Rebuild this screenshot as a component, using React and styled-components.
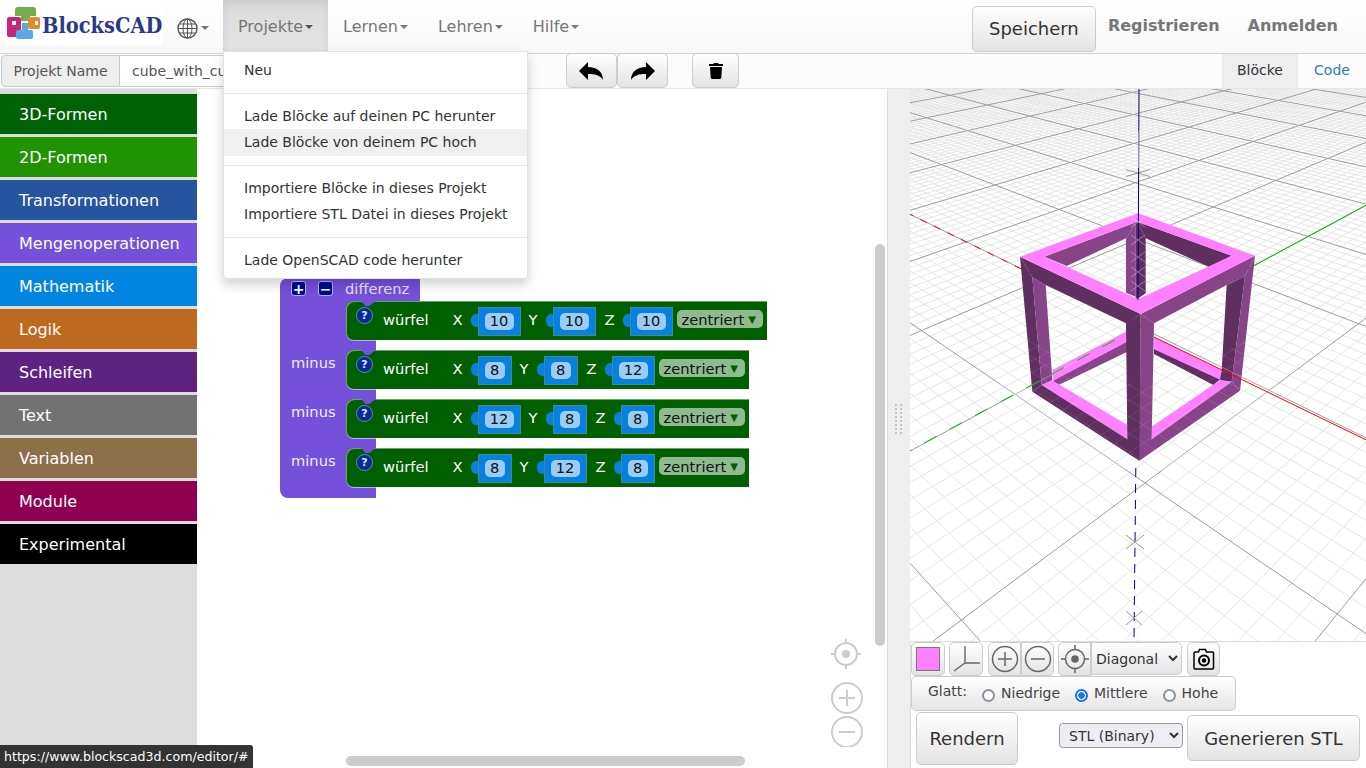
import React from "react";
import styled, { createGlobalStyle } from "styled-components";
import { FaTrash } from "react-icons/fa";

const GlobalStyle = createGlobalStyle`
  html, body {
    margin: 0;
    padding: 0;
    background: #fff;
    overflow: hidden;
  }
  * {
    box-sizing: border-box;
  }
  body {
    font-family: "DejaVu Sans", sans-serif;
  }
`;

const PURPLE = "#7450db";
const GREEN = "#005f00";

const Page = styled.div`
  position: relative;
  width: 1366px;
  height: 768px;
  overflow: hidden;
  display: flex;
  flex-direction: column;
`;

const Navbar = styled.header`
  height: 54px;
  flex: none;
  display: flex;
  align-items: flex-start;
  background: linear-gradient(to bottom, #fff, #f8f8f8);
  border-bottom: 1px solid #d4d4d4;
`;

const LogoBox = styled.div`
  width: 157px;
  height: 41px;
  margin: 4px 0 0 6px;
  background: #fff;
  display: flex;
  align-items: center;
  flex: none;
  position: relative;
`;

const LogoText = styled.span`
  display: inline-block;
  margin-left: 36px;
  margin-top: -1px;
  font-family: "DejaVu Serif", serif;
  font-weight: 700;
  font-size: 23px;
  color: #2b3a86;
  transform: scaleX(0.845);
  transform-origin: left center;
`;

const LogoMark = styled.svg`
  position: absolute;
  left: 0;
  top: 3px;
`;

const GlobeToggle = styled.div`
  margin: 17px 14px 0 14px;
  display: flex;
  align-items: center;
  gap: 1px;
  height: 22px;
`;

const Caret = styled.i`
  display: inline-block;
  width: 0;
  height: 0;
  margin-left: 2px;
  border-top: 4px solid ${(p) => p.$color || "#777"};
  border-left: 4px solid transparent;
  border-right: 4px solid transparent;
`;

const NavItem = styled.div`
  height: 52px;
  padding: 1px 15px 0;
  display: flex;
  align-items: center;
  font-size: 16px;
  color: #777;
  background: ${(p) => (p.$active ? "linear-gradient(to bottom,#dbdbdb,#e4e4e4)" : "transparent")};
  box-shadow: ${(p) => (p.$active ? "inset 0 3px 9px rgba(0,0,0,.08)" : "none")};
`;

const NavRight = styled.div`
  margin-left: auto;
  display: flex;
  align-items: center;
  height: 52px;
  padding-right: 28px;
`;

const Button = styled.button`
  font-family: inherit;
  color: #333;
  background: linear-gradient(to bottom, #fff, #e3e3e3);
  border: 1px solid #ccc;
  border-radius: 5px;
  padding: 0;
  display: flex;
  align-items: center;
  justify-content: center;
`;

const SaveButton = styled(Button)`
  width: 124px;
  height: 46px;
  margin-top: 5px;
  font-size: 18px;
`;

const NavLink = styled.a`
  font-size: 16px;
  font-weight: 700;
  color: #777;
  margin-left: ${(p) => p.$gap}px;
  margin-top: -2px;
`;

const SubBar = styled.div`
  height: 35px;
  flex: none;
  display: flex;
  align-items: stretch;
  background: #fcfcfc;
  border-bottom: 1px solid #e6e6e6;
`;

const NameGroup = styled.div`
  display: flex;
  margin: 1px 0 0 1px;
  width: 524px;
  height: 32px;
  font-size: 14px;
  color: #555;
`;

const NameLabel = styled.div`
  width: 119px;
  padding-bottom: 1px;
  background: #eee;
  border: 1px solid #ccc;
  border-radius: 4px 0 0 4px;
  display: flex;
  align-items: center;
  justify-content: center;
`;

const NameInput = styled.div`
  flex: 1;
  padding: 0 0 1px 12px;
  background: #fff;
  border: 1px solid #ccc;
  border-left: none;
  display: flex;
  align-items: center;
`;

const IconButton = styled(Button)`
  width: ${(p) => p.$w}px;
  height: 35px;
  margin-left: ${(p) => p.$gap || 0}px;
  margin-top: -1px;
  color: #000;
`;

const ArrowSvg = styled.svg`
  transform: ${(p) => (p.$flip ? "scaleX(-1)" : "none")};
`;

const Tabs = styled.div`
  margin-left: auto;
  display: flex;
  font-size: 14px;
`;

const Tab = styled.div`
  width: ${(p) => p.$w}px;
  padding-bottom: 2px;
  display: flex;
  align-items: center;
  justify-content: center;
  background: ${(p) => (p.$active ? "#eee" : "transparent")};
  color: ${(p) => (p.$active ? "#333" : "#337ab7")};
`;

const Main = styled.main`
  flex: 1;
  display: flex;
  min-height: 0;
`;

const Toolbox = styled.nav`
  width: 197px;
  flex: none;
  background: #ddd;
  padding-top: 5px;
  display: flex;
  flex-direction: column;
  gap: 3px;
`;

const Category = styled.div`
  height: 40px;
  padding-left: 19px;
  display: flex;
  align-items: center;
  color: #fff;
  font-size: 16px;
  background: ${(p) => p.$color};
`;

const Workspace = styled.section`
  position: relative;
  width: 690px;
  flex: none;
  background: #fff;
`;

const Scroll = styled.div`
  position: absolute;
  background: #ccc;
  border-radius: 5px;
  left: ${(p) => p.$x}px;
  top: ${(p) => p.$y}px;
  width: ${(p) => p.$w}px;
  height: ${(p) => p.$h}px;
`;

const ZoomIcons = styled.svg`
  position: absolute;
  left: 630px;
  top: 548px;
`;

/* the block stack sits on the free blockly canvas */
const BlockStack = styled.div`
  position: absolute;
  left: 83px;
  top: 189px;
  font-size: 14.67px;
  color: #fff;
`;

const DiffHeader = styled.div`
  width: 140px;
  height: 23px;
  background: ${PURPLE};
  border-radius: 8px 0 0 0;
  display: flex;
  align-items: center;
  padding: 0 0 2px 11px;
  color: #e6e0fa;
`;

const Mutator = styled.span`
  width: 15px;
  height: 15px;
  background: #000a8c;
  border: 1px solid #b9b0ee;
  border-radius: 3px;
  margin-right: 12px;
  display: flex;
  align-items: center;
  justify-content: center;
  color: #fff;
  font-size: 14px;
  font-weight: 700;
  line-height: 1;
`;

const StackRow = styled.div`
  display: flex;
  align-items: flex-start;
  height: 39px;
  background: linear-gradient(to right, ${PURPLE} 76px, transparent 76px);
`;

const Mouth = styled.div`
  width: 66px;
  height: 39px;
  flex: none;
  padding: 4px 0 0 11px;
  color: #f0ecff;
`;

const CubeBlock = styled.div`
  position: relative;
  height: 39px;
  display: inline-flex;
  align-items: center;
  padding: 0 4px 0 10px;
  background: ${GREEN};
  border-radius: 8px 0 0 8px;
  box-shadow: inset 1px 1px 0 #6f9f6f, 0 1px 0 rgba(255, 255, 255, 0.55);

  &::before {
    content: "";
    position: absolute;
    left: 15px;
    top: 0;
    width: 15px;
    height: 5px;
    background: ${PURPLE};
    clip-path: polygon(0 0, 100% 0, 55% 100%, 30% 100%);
  }
`;

const HelpIcon = styled.span`
  position: relative;
  width: 17px;
  height: 17px;
  flex: none;
  margin: -11px 10px 0 0;
  border-radius: 50%;
  background: #0a2a96;
  border: 1px solid #5f8fb0;
  color: #dfe6ff;
  font-size: 11px;
  font-weight: 700;
  display: flex;
  align-items: center;
  justify-content: center;
`;

const CubeTitle = styled.span`
  margin-right: 24px;
  margin-top: -2px;
`;

const AxisLabel = styled.span`
  margin-right: 8px;
  margin-left: ${(p) => p.$extra || 0}px;
  margin-top: -2px;
`;

const ValueTab = styled.span`
  width: 7px;
  height: 13px;
  flex: none;
  background: #0880e0;
  border-radius: 5px 0 0 5px / 6px 0 0 6px;
`;

const ValueBox = styled.span`
  height: 29px;
  margin-top: 1px;
  margin-right: ${(p) => (p.$last ? 4 : 8)}px;
  padding: 0 6px;
  display: flex;
  align-items: center;
  background: #0880e0;
  border: 1px solid #3f8a9a;
`;

const ValuePill = styled.span`
  width: ${(p) => (p.$wide ? 29 : 20)}px;
  height: 17px;
  border-radius: 5px;
  background: #99cdf6;
  color: #111;
  text-align: center;
  line-height: 16px;
`;

const Dropdown = styled.span`
  height: 18px;
  width: 86px;
  padding-left: 5px;
  margin-top: -3px;
  border-radius: 5px;
  background: #8fbb8f;
  color: #111;
  display: flex;
  align-items: center;
  gap: 4px;
  white-space: nowrap;

  small {
    color: ${GREEN};
    font-size: 10px;
  }
`;

const Connector = styled.div`
  width: 96px;
  height: 10px;
  background: ${PURPLE};
`;

const StackEnd = styled(Connector)`
  height: 11px;
  border-radius: 0 0 0 8px;
`;

const Splitter = styled.div`
  width: 23px;
  flex: none;
  background: #efefef;
  border-left: 1px solid #ddd;
  display: flex;
  align-items: center;
  justify-content: center;
  padding-bottom: 20px;
`;

const ViewerPanel = styled.section`
  flex: 1;
  display: flex;
  flex-direction: column;
  background: #fff;
  border-left: 1px solid #ddd;
`;

const ViewerCanvas = styled.svg`
  display: block;
  flex: none;
  margin-left: -1px;
`;

const ViewBar = styled.div`
  height: 35px;
  flex: none;
  display: flex;
  border-top: 1px solid #ddd;
`;

const ViewButton = styled(Button)`
  width: ${(p) => p.$w || 34}px;
  height: 34px;
  margin-left: ${(p) => p.$gap || 0}px;
  border-radius: ${(p) => p.$radius || "5px"};
`;

const Swatch = styled.span`
  width: 24px;
  height: 24px;
  background: #ff80ff;
  border: 1px solid #777;
`;

const ViewSelect = styled.select`
  width: 91px;
  height: 33px;
  font-family: inherit;
  font-size: 14px;
  color: #333;
  padding-left: 0;
  background: linear-gradient(to bottom, #fff, #e3e3e3);
  border: 1px solid #ccc;
  border-radius: 0 5px 5px 0;
`;

const SmoothPanel = styled.div`
  width: 325px;
  height: 35px;
  flex: none;
  display: flex;
  align-items: center;
  font-size: 14px;
  color: #444;
  padding-left: 16px;
  background: linear-gradient(to bottom, #fff, #e6e6e6);
  border: 1px solid #ccc;
  border-radius: 5px;

  > span {
    margin: -5px 6px 0 0;
  }
`;

const RadioLabel = styled.label`
  display: flex;
  align-items: center;
  margin-left: ${(p) => p.$gap}px;
  margin-top: -1px;
  gap: 6px;

  input {
    appearance: none;
    width: 13px;
    height: 13px;
    margin: 4px 0 0;
    background: #fff;
    border: 2px solid #8f8f9d;
    border-radius: 50%;
  }

  input:checked {
    border-color: #1a73e8;
    background: radial-gradient(circle, #1a73e8 0, #1a73e8 3px, #fff 3.5px);
  }
`;

const ExportBar = styled.div`
  flex: 1;
  display: flex;
  align-items: center;
  padding: 0 0 3px 5px;
`;

const RenderButton = styled(Button)`
  width: 102px;
  height: 53px;
  font-size: 18px;
  margin-top: 1px;
`;

const FormatSelect = styled.select`
  width: 124px;
  height: 25px;
  margin: -5px 0 0 41px;
  font-family: inherit;
  font-size: 14px;
  color: #333;
  background: #ededf3;
  border: 1px solid #9a9aa5;
  border-radius: 4px;
  padding-left: 5px;
`;

const StlButton = styled(Button)`
  width: 173px;
  height: 46px;
  margin-left: 4px;
  font-size: 18px;
`;

const Menu = styled.ul`
  position: absolute;
  left: 223px;
  top: 51px;
  width: 305px;
  height: 228px;
  margin: 0;
  padding: 5px 0;
  list-style: none;
  background: #fff;
  border: 1px solid #e2e2e2;
  border-radius: 0 0 4px 4px;
  box-shadow: 0 6px 12px rgba(0, 0, 0, 0.175);
  font-size: 14px;
  color: #333;
`;

const MenuItem = styled.li`
  height: 26.5px;
  line-height: 26.5px;
  padding-left: 20px;
  background: ${(p) => (p.$hover ? "#f0f0f0" : "transparent")};
`;

const MenuDivider = styled.li`
  height: 1px;
  margin: 9px 0;
  background: #e5e5e5;
`;

const StatusTip = styled.div`
  position: absolute;
  left: 0;
  bottom: 0;
  width: 253px;
  height: 23px;
  padding-left: 4px;
  background: #333;
  color: #fff;
  font-size: 12.6px;
  line-height: 23px;
  white-space: nowrap;
  border-top-right-radius: 3px;
`;

const categories = [
  ["3D-Formen", "#006205"],
  ["2D-Formen", "#209303"],
  ["Transformationen", "#26549e"],
  ["Mengenoperationen", PURPLE],
  ["Mathematik", "#0185e1"],
  ["Logik", "#be6920"],
  ["Schleifen", "#5e2281"],
  ["Text", "#727272"],
  ["Variablen", "#8c7049"],
  ["Module", "#900050"],
  ["Experimental", "#000"],
];

const cubes = [
  { label: "", v: [10, 10, 10] },
  { label: "minus", v: [8, 8, 12] },
  { label: "minus", v: [12, 8, 8] },
  { label: "minus", v: [8, 12, 8] },
];

// floor plane projection, fitted to the grid of the 3D view
function project(u, v) {
  const t = (u - v) / 2;
  const w = u + v;
  const s = 1 / (0.002481 - 0.000692 * t);
  const y = -76 + s - w * 0.0043 * s;
  const x = 1140 + (y - 327) * 0.032 + w * 0.2713 * s;
  return `${x.toFixed(1)} ${y.toFixed(1)}`;
}

function gridPath(step, skipMajor) {
  let d = "";
  const n = Math.round(20 / step);
  for (let i = -n; i <= n; i++) {
    if (skipMajor && i % 10 === 0) continue;
    const c = i * step;
    d += `M${project(c, c - 6)}L${project(c, c + 14)}`;
    d += `M${project(c - 14, c)}L${project(c + 6, c)}`;
  }
  return d;
}

const minorGrid = gridPath(0.1, true);
const majorGrid = gridPath(1, false);

const Cross = ({ x, y, rx, ry, color }) => (
  <path d={`M${x - rx} ${y - ry}L${x + rx} ${y + ry}M${x - rx} ${y + ry}L${x + rx} ${y - ry}`} stroke={color} fill="none" />
);

const TOP = "#ff80ff";
const LIGHT = "#884488";
const DARK = "#5f2f60";

const Cube = () => (
  <g transform="translate(1000 190) scale(0.33333)">
    {/* back column */}
    <polygon points="412,95 378,145 378,308 407,320 407,95" fill={LIGHT} />
    <polygon points="412,95 437,145 437,310 407,330 407,95" fill={DARK} />
    {/* back rails of the bottom */}
    <polygon points="382,452 160,565 165,590 382,485" fill={LIGHT} />
    <polygon points="382,423 157,540 160,572 382,455" fill={TOP} />
    <polygon points="462,475 662,567 640,585 462,492" fill={DARK} />
    <polygon points="462,440 665,540 662,570 462,478" fill={TOP} />
    {/* front rails of the bottom */}
    <polygon points="125,585 155,570 382,705 382,748" fill={TOP} />
    <polygon points="455,710 660,570 695,575 455,748" fill={TOP} />
    <polygon points="97,605 125,585 382,748 418,768 418,812" fill={DARK} />
    <polygon points="418,812 720,602 695,575 455,748 418,768" fill={LIGHT} />
    {/* left column */}
    <polygon points="60,200 97,262 125,585 97,605" fill={DARK} />
    <polygon points="97,262 137,285 157,570 125,585" fill={LIGHT} />
    {/* right column */}
    <polygon points="680,285 735,258 695,575 660,570 665,540" fill={DARK} />
    <polygon points="735,258 765,197 720,602 695,575" fill={LIGHT} />
    {/* top ring */}
    <polygon points="133,200 412,95 378,145 200,228" fill={LIGHT} />
    <polygon points="412,95 695,197 630,232 437,145" fill={DARK} />
    <polygon points="60,200 422,372 378,400 137,285 97,262" fill={DARK} />
    <polygon points="422,372 765,197 735,258 680,285 462,400" fill={LIGHT} />
    {/* front column */}
    <polygon points="378,398 422,372 420,812 382,748" fill={DARK} />
    <polygon points="422,372 462,400 455,748 418,812" fill={LIGHT} />
    <path
      fillRule="evenodd"
      fill={TOP}
      d="M415 70L765 197L422 372L60 200ZM412 95L133 200L415 327L695 197Z"
    />
  </g>
);

const Viewer = () => (
  <ViewerCanvas width="456" height="552" viewBox="910 89 456 552">
    <defs>
      <clipPath id="below-floor">
        <polygon points="1000,327 1140,387 1277,327 1277,470 1000,470" />
      </clipPath>
    </defs>
    <rect x="910" y="89" width="456" height="552" fill="#fff" />
    <path d={minorGrid} stroke="#e6e6e6" fill="none" />
    <path d={majorGrid} stroke="#9c9c9c" fill="none" />
    <path d={`M${project(-5, 0)}L${project(0, 0)}`} stroke="#f00" strokeDasharray="7 8" fill="none" />
    <path d={`M${project(0, 0)}L${project(0, 5)}`} stroke="#0b0" fill="none" />
    <Cross x={1138} y={173} rx={12} ry={3.5} color="#999" />
    <Cube />
    <g clipPath="url(#below-floor)">
      <path d={minorGrid} stroke="rgba(255,255,255,.1)" fill="none" />
      <path d={majorGrid} stroke="rgba(255,255,255,.3)" fill="none" />
    </g>
    <path d={`M1154 337L${project(3, 0)}`} stroke="#f00" fill="none" />
    <path d={`M1115 340L${project(0, -3)}`} stroke="#0b0" strokeDasharray="14 15" fill="none" />
    <path d="M1139 89L1138 300" stroke="#00008b" fill="none" />
    <path d="M1138.8 131L1138.6 168" stroke="#a4a4d4" fill="none" />
    {[222, 240, 257, 272, 286].map((y) => (
      <Cross key={y} x={1138} y={y} rx={7} ry={5} color="rgba(255,255,255,.35)" />
    ))}
    <path d="M1135.8 468L1134 641" stroke="#00008b" strokeDasharray="9 7" fill="none" />
    <Cross x={1135} y={542} rx={9} ry={7} color="#999" />
    <Cross x={1134} y={618} rx={8} ry={7} color="#999" />
  </ViewerCanvas>
);

const Logo = () => (
  <LogoMark width="36" height="34" viewBox="6 7 36 34">
    <path d="M15 10a3 3 0 0 1 3-3h15a3 3 0 0 1 3 3v6h-6v5h-9v-5h-6z" fill="#73ad4e" />
    <rect x="7" y="17" width="14" height="20" rx="2" fill="#c9257a" />
    <rect x="12" y="21" width="4" height="4" fill="#fff" />
    <rect x="28" y="17" width="12" height="12" rx="2" fill="#e08a2c" />
    <rect x="35" y="21" width="3" height="4" fill="#fff" />
    <path d="M22 23h6v7h3a2 2 0 0 1 2 2v5a2 2 0 0 1-2 2H18a2 2 0 0 1-2-2v-5a2 2 0 0 1 2-2h4z" fill="#5aa7e6" />
  </LogoMark>
);

const Globe = () => (
  <svg width="21" height="21" viewBox="0 0 21 21" fill="none" stroke="#555" strokeWidth="1">
    <circle cx="10.5" cy="10.5" r="9.5" strokeWidth="1.4" />
    <ellipse cx="10.5" cy="10.5" rx="4.5" ry="9.5" />
    <path d="M10.5 1v19M1 10.5h19M2.4 6h16.2M2.4 15h16.2" />
  </svg>
);

const ArrowIcon = ({ flip }) => (
  <ArrowSvg $flip={flip} width="25" height="20" viewBox="0 0 25 20">
    <path d="M0 10L9 1V6C18 6 24 11 24 19C21 14 16 13 9 13V19Z" fill="#000" />
  </ArrowSvg>
);

const Target = ({ color = "#666" }) => (
  <svg width="30" height="30" viewBox="0 0 30 30" fill="none" stroke={color} strokeWidth="1.5">
    <circle cx="15" cy="15" r="9.5" />
    <circle cx="15" cy="15" r="3.8" fill={color} stroke="none" />
    <path d="M15 1v4M15 25v4M1 15h4M25 15h4" />
  </svg>
);

const RoundSign = ({ minus }) => (
  <svg width="28" height="28" viewBox="0 0 28 28" fill="none" stroke="#666" strokeWidth="1.5">
    <circle cx="14" cy="14" r="12.5" />
    <path d={minus ? "M7 14h14" : "M7 14h14M14 7v14"} />
  </svg>
);

const AxesIcon = () => (
  <svg width="28" height="28" viewBox="0 0 28 28" fill="none" stroke="#666" strokeWidth="1.4">
    <path d="M13 1v17M13 18h15M13 18L2 26" />
  </svg>
);

const CameraIcon = () => (
  <svg width="22" height="24" viewBox="0 0 22 24" fill="none" stroke="#000" strokeWidth="1.5">
    <path d="M2 5h3.500l1-2.500h6l1 2.500h6a1 1 0 0 1 1 1v15a1 1 0 0 1-1 1H2a1 1 0 0 1-1-1V6a1 1 0 0 1 1-1z" />
    <circle cx="11" cy="13.500" r="5" strokeWidth="2" />
    <circle cx="11" cy="13.500" r="2.200" fill="#000" stroke="none" />
  </svg>
);

const Grip = () => (
  <svg width="8" height="30" viewBox="0 0 8 30" fill="#c4c4c4">
    {Array.from({ length: 8 }).map((_, i) => (
      <React.Fragment key={i}>
        <rect x="0" y={i * 4} width="2" height="2" />
        <rect x="5" y={i * 4} width="2" height="2" />
      </React.Fragment>
    ))}
  </svg>
);

const CubeRow = ({ label, v }) => (
  <StackRow>
    <Mouth>{label}</Mouth>
    <CubeBlock>
      <HelpIcon>?</HelpIcon>
      <CubeTitle>würfel</CubeTitle>
      {["X", "Y", "Z"].map((axis, i) => (
        <React.Fragment key={axis}>
          <AxisLabel $extra={i === 2 ? 1 : 0}>{axis}</AxisLabel>
          <ValueTab />
          <ValueBox $last={i === 2}>
            <ValuePill $wide={v[i] > 9}>{v[i]}</ValuePill>
          </ValueBox>
        </React.Fragment>
      ))}
      <Dropdown>
        zentriert <small>▼</small>
      </Dropdown>
    </CubeBlock>
  </StackRow>
);

export default function App() {
  return (
    <Page>
      <GlobalStyle />
      <Navbar>
        <LogoBox>
          <Logo />
          <LogoText>BlocksCAD</LogoText>
        </LogoBox>
        <GlobeToggle>
          <Globe />
          <Caret />
        </GlobeToggle>
        <NavItem $active>
          Projekte
          <Caret $color="#555" />
        </NavItem>
        <NavItem>
          Lernen
          <Caret />
        </NavItem>
        <NavItem>
          Lehren
          <Caret />
        </NavItem>
        <NavItem>
          Hilfe
          <Caret />
        </NavItem>
        <NavRight>
          <SaveButton>Speichern</SaveButton>
          <NavLink $gap={12}>Registrieren</NavLink>
          <NavLink $gap={28}>Anmelden</NavLink>
        </NavRight>
      </Navbar>
      <SubBar>
        <NameGroup>
          <NameLabel>Projekt Name</NameLabel>
          <NameInput>cube_with_cu</NameInput>
        </NameGroup>
        <IconButton $w={51} $gap={41}>
          <ArrowIcon />
        </IconButton>
        <IconButton $w={51}>
          <ArrowIcon flip />
        </IconButton>
        <IconButton $w={47} $gap={24}>
          <FaTrash size={16} />
        </IconButton>
        <Tabs>
          <Tab $w={76} $active>
            Blöcke
          </Tab>
          <Tab $w={68}>Code</Tab>
        </Tabs>
      </SubBar>
      <Main>
        <Toolbox>
          {categories.map(([name, color]) => (
            <Category key={name} $color={color}>
              {name}
            </Category>
          ))}
        </Toolbox>
        <Workspace>
          <BlockStack>
            <DiffHeader>
              <Mutator>+</Mutator>
              <Mutator>−</Mutator>
              differenz
            </DiffHeader>
            {cubes.map((c, i) => (
              <React.Fragment key={i}>
                <CubeRow label={c.label} v={c.v} />
                {i < cubes.length - 1 ? <Connector /> : <StackEnd />}
              </React.Fragment>
            ))}
          </BlockStack>
          <Scroll $x={678} $y={155} $w={10} $h={402} />
          <Scroll $x={149} $y={667} $w={399} $h={10} />
          <ZoomIcons width="40" height="110" viewBox="0 0 40 110" fill="none" stroke="#ccc" strokeWidth="2">
            <circle cx="19" cy="17" r="11" />
            <circle cx="19" cy="17" r="4" fill="#ccc" stroke="none" />
            <path d="M19 2v4M19 28v4M4 17h4M30 17h4" />
            <circle cx="20" cy="61" r="15" />
            <path d="M12 61h16M20 53v16" />
            <circle cx="20" cy="95" r="15" />
            <path d="M12 95h16" />
          </ZoomIcons>
        </Workspace>
        <Splitter>
          <Grip />
        </Splitter>
        <ViewerPanel>
          <Viewer />
          <ViewBar>
            <ViewButton>
              <Swatch />
            </ViewButton>
            <ViewButton $gap={4}>
              <AxesIcon />
            </ViewButton>
            <ViewButton $gap={5} $w={33} $radius="5px 0 0 5px">
              <RoundSign />
            </ViewButton>
            <ViewButton $w={33} $radius="0 5px 5px 0">
              <RoundSign minus />
            </ViewButton>
            <ViewButton $gap={4} $w={33} $radius="5px 0 0 5px">
              <Target />
            </ViewButton>
            <ViewSelect defaultValue="Diagonal">
              <option>Diagonal</option>
            </ViewSelect>
            <ViewButton $gap={5} $w={33}>
              <CameraIcon />
            </ViewButton>
          </ViewBar>
          <SmoothPanel>
            <span>Glatt:</span>
            <RadioLabel $gap={9}>
              <input type="radio" name="smooth" />
              Niedrige
            </RadioLabel>
            <RadioLabel $gap={15}>
              <input type="radio" name="smooth" defaultChecked />
              Mittlere
            </RadioLabel>
            <RadioLabel $gap={15}>
              <input type="radio" name="smooth" />
              Hohe
            </RadioLabel>
          </SmoothPanel>
          <ExportBar>
            <RenderButton>Rendern</RenderButton>
            <FormatSelect defaultValue="STL (Binary)">
              <option>STL (Binary)</option>
            </FormatSelect>
            <StlButton>Generieren STL</StlButton>
          </ExportBar>
        </ViewerPanel>
      </Main>
      <Menu>
        <MenuItem>Neu</MenuItem>
        <MenuDivider />
        <MenuItem>Lade Blöcke auf deinen PC herunter</MenuItem>
        <MenuItem $hover>Lade Blöcke von deinem PC hoch</MenuItem>
        <MenuDivider />
        <MenuItem>Importiere Blöcke in dieses Projekt</MenuItem>
        <MenuItem>Importiere STL Datei in dieses Projekt</MenuItem>
        <MenuDivider />
        <MenuItem>Lade OpenSCAD code herunter</MenuItem>
      </Menu>
      <StatusTip>https://www.blockscad3d.com/editor/#</StatusTip>
    </Page>
  );
}
